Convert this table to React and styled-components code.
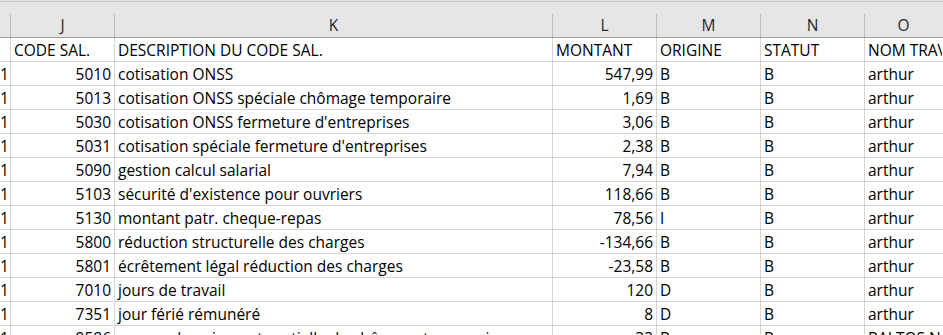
import React from "react";
import styled, { createGlobalStyle } from "styled-components";

const Global = createGlobalStyle`
  html, body { margin: 0; padding: 0; background: #ffffff; overflow: hidden; }
  body { font-family: "Open Sans", Lato, sans-serif; }
`;

const COLS = "11px 104px 438px 104px 104px 104px 1fr";

const Sheet = styled.div`
  width: 943px;
  height: 335px;
  overflow: hidden;
  background: #ffffff;
`;

const HeaderBand = styled.div`
  height: 38px;
  box-sizing: border-box;
  background: #e6e6e6;
  border-top: 1px solid #e0e0e0;
  border-bottom: 1px solid #9f9f9f;
  display: flex;
  flex-direction: column;
`;

const TopStrip = styled.div`
  height: 13px;
  border-top: 1px solid #c6c6c6;
  box-sizing: border-box;
`;

const LetterRow = styled.div`
  display: grid;
  grid-template-columns: ${COLS};
  flex: 1;
`;

const Letter = styled.div`
  border-right: 1px solid ${(p) => (p.$last ? "transparent" : "#bcbcbc")};
  font-size: 15.5px;
  color: #262626;
  text-align: center;
  line-height: 22px;
  white-space: nowrap;
  overflow: hidden;
`;

const Row = styled.div`
  display: grid;
  grid-template-columns: ${COLS};
  height: 24px;
  box-sizing: border-box;
  border-bottom: 1px solid #d4d4d4;
`;

const Cell = styled.div`
  border-right: 1px solid ${(p) => (p.$last ? "transparent" : "#d4d4d4")};
  font-size: 15.5px;
  color: #000;
  line-height: 23px;
  padding: 1px 3px 0 ${(p) => (p.$right ? "0" : "3px")};
  text-align: ${(p) => (p.$right ? "right" : "left")};
  white-space: nowrap;
  overflow: hidden;
  box-sizing: border-box;
  height: 23px;
`;

const letters = ["", "J", "K", "L", "M", "N", "O"];

const header = ["CODE SAL.", "DESCRIPTION DU CODE SAL.", "MONTANT", "ORIGINE", "STATUT", "NOM TRAV"];

const data = [
  ["5010", "cotisation ONSS", "547,99", "B", "B", "arthur"],
  ["5013", "cotisation ONSS spéciale chômage temporaire", "1,69", "B", "B", "arthur"],
  ["5030", "cotisation ONSS fermeture d'entreprises", "3,06", "B", "B", "arthur"],
  ["5031", "cotisation spéciale fermeture d'entreprises", "2,38", "B", "B", "arthur"],
  ["5090", "gestion calcul salarial", "7,94", "B", "B", "arthur"],
  ["5103", "sécurité d'existence pour ouvriers", "118,66", "B", "B", "arthur"],
  ["5130", "montant patr. cheque-repas", "78,56", "I", "B", "arthur"],
  ["5800", "réduction structurelle des charges", "-134,66", "B", "B", "arthur"],
  ["5801", "écrêtement légal réduction des charges", "-23,58", "B", "B", "arthur"],
  ["7010", "jours de travail", "120", "D", "B", "arthur"],
  ["7351", "jour férié rémunéré", "8", "D", "B", "arthur"],
  ["9586", "moyen de paiement partielle du chômage temporaire", "33", "B", "B", "BALTOS N"],
];

export default function App() {
  return (
    <>
      <Global />
      <Sheet>
        <HeaderBand>
          <TopStrip />
          <LetterRow>
            {letters.map((l, i) => (
              <Letter key={i} $last={i === letters.length - 1}>{l}</Letter>
            ))}
          </LetterRow>
        </HeaderBand>
        <Row>
          <Cell />
          {header.map((h, i) => (
            <Cell key={i} $last={i === header.length - 1}>{h}</Cell>
          ))}
        </Row>
        {data.map((r, i) => (
          <Row key={i}>
            <Cell $right>1</Cell>
            <Cell $right>{r[0]}</Cell>
            <Cell>{r[1]}</Cell>
            <Cell $right>{r[2]}</Cell>
            <Cell>{r[3]}</Cell>
            <Cell>{r[4]}</Cell>
            <Cell $last>{r[5]}</Cell>
          </Row>
        ))}
      </Sheet>
    </>
  );
}
